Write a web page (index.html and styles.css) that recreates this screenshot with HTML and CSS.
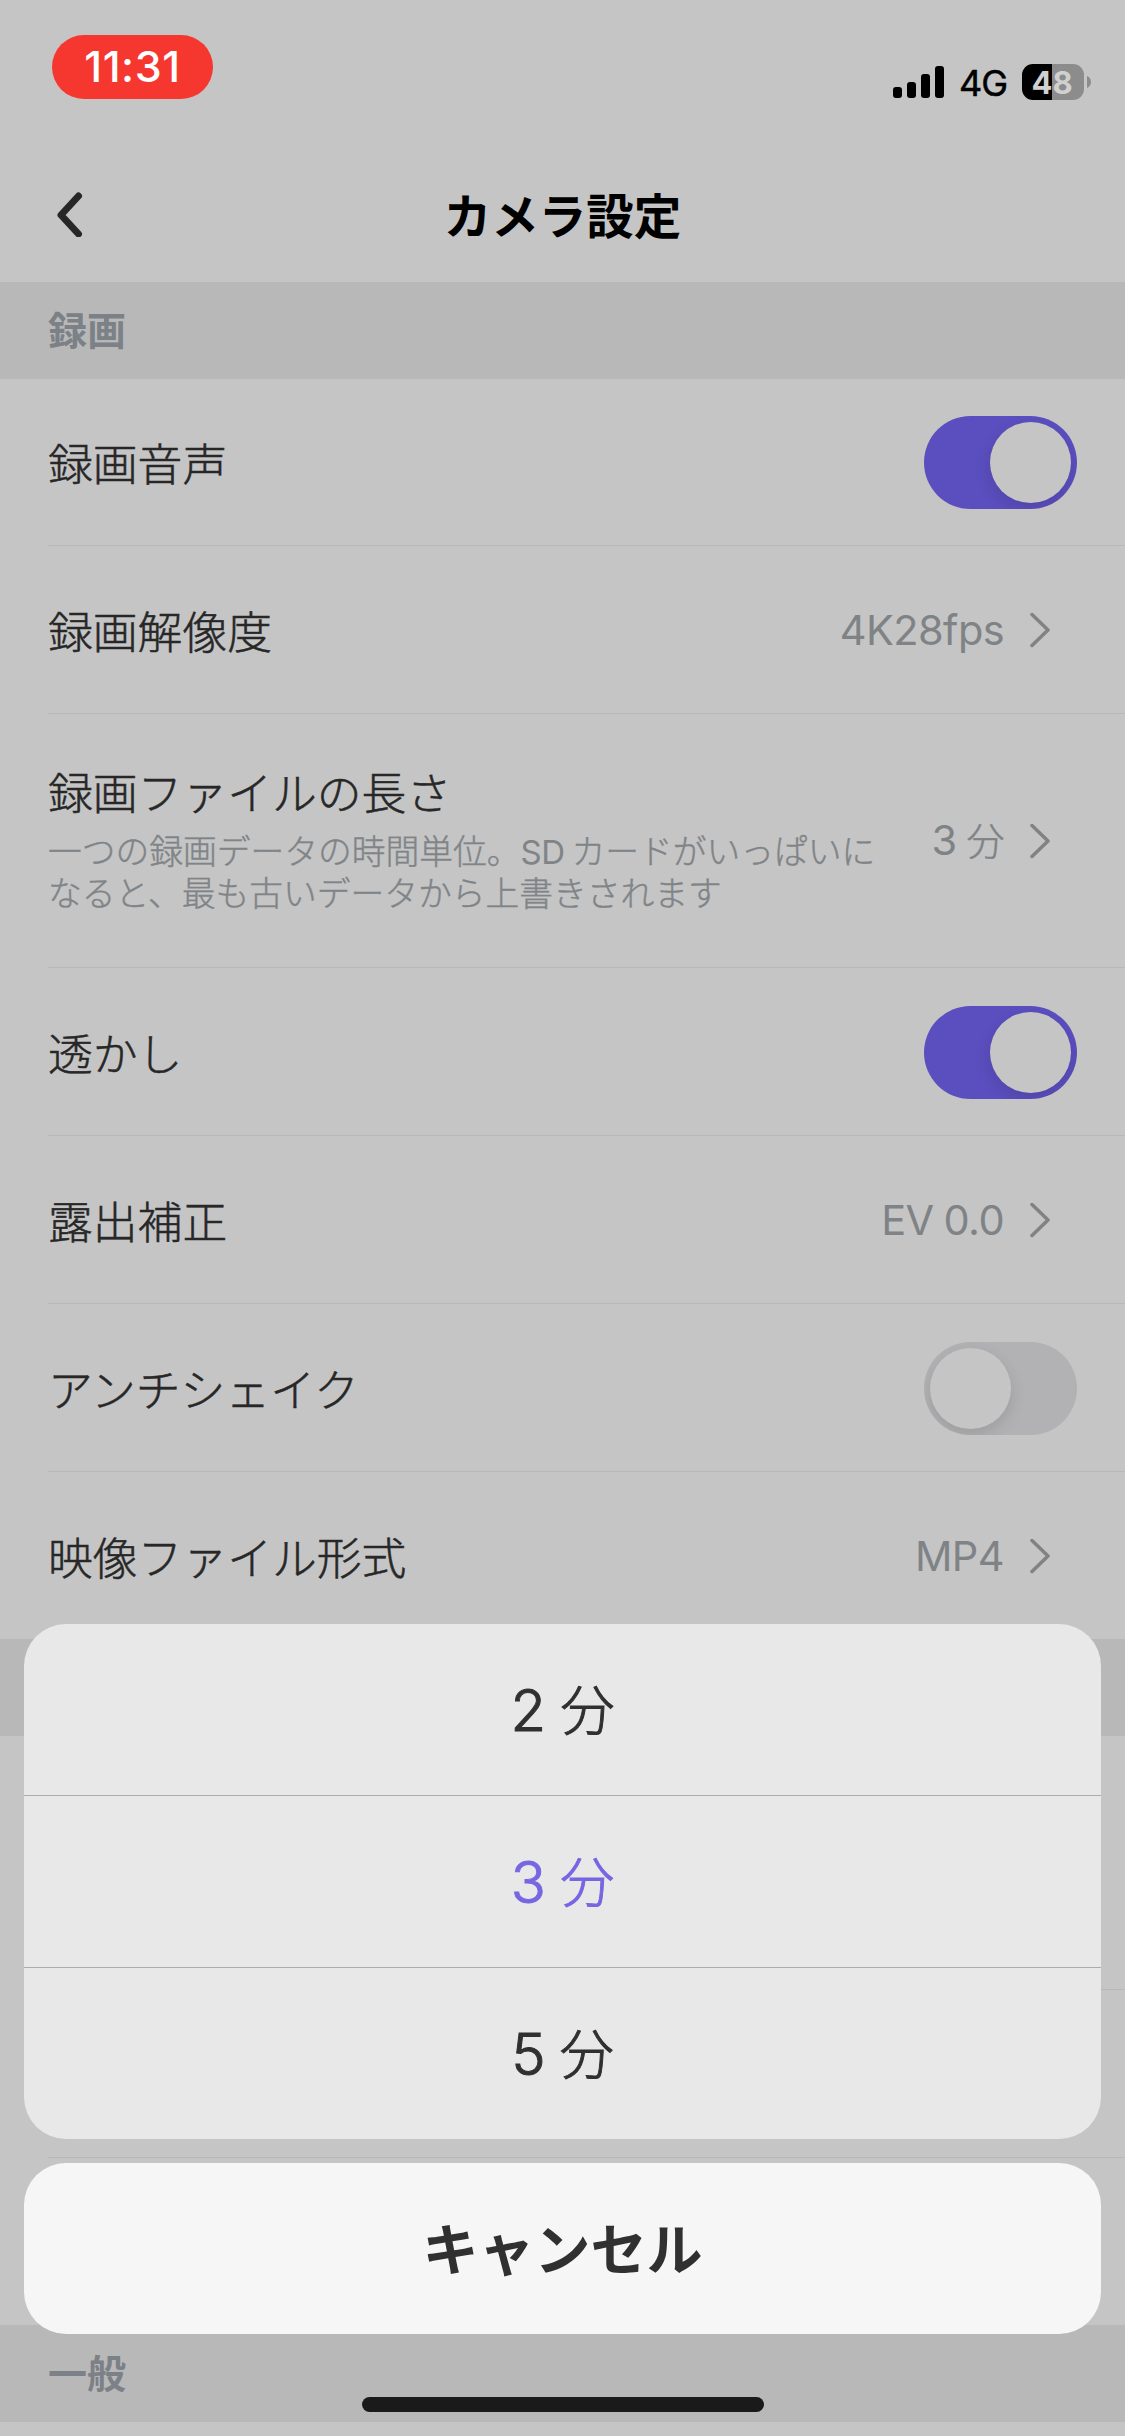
FILE: index.html
```html
<!DOCTYPE html>
<html lang="ja">
<head>
<meta charset="utf-8">
<title>カメラ設定</title>
<link rel="stylesheet" href="styles.css">
</head>
<body>
<div class="screen">
  <header class="status">
    <div class="clock">11:31</div>
    <div class="indicators">
      <svg class="signal" width="51" height="32" viewBox="0 0 51 32"><rect x="0" y="21" width="9" height="11" rx="3"/><rect x="14" y="16" width="9" height="16" rx="3"/><rect x="28" y="8" width="9" height="24" rx="3"/><rect x="42" y="0" width="9" height="32" rx="3"/></svg>
      <span class="network">4G</span>
      <div class="battery">48</div>
      <svg class="battery-tip" width="4" height="12" viewBox="0 0 4 12"><path d="M0 0C2.6 1.2 4 3.4 4 6s-1.4 4.800-4 6z"/></svg>
    </div>
  </header>
  <nav class="navbar">
    <svg class="back" width="29" height="46" viewBox="0 0 29 46"><path d="M23.500 5 6 24l17.500 19"/></svg>
    <h1 class="title">カメラ設定</h1>
  </nav>
  <h2 class="section">録画</h2>
  <div class="list">
    <div class="row first"><span class="label">録画音声</span><span class="toggle on"><i class="knob"></i></span></div>
    <div class="row"><span class="label">録画解像度</span><span class="value">4K28fps</span><svg class="chev" width="21" height="36" viewBox="0 0 21 36"><path d="M2 2.500 18 18 2 33.500"/></svg></div>
    <div class="row tall">
      <div class="text"><span class="label">録画ファイルの長さ</span><p class="desc">一つの録画データの時間単位。<span class="latin">SD</span>カードがいっぱいに<br>なると、最も古いデータから上書きされます</p></div>
      <span class="value">3 <span class="unit">分</span></span><svg class="chev" width="21" height="36" viewBox="0 0 21 36"><path d="M2 2.500 18 18 2 33.500"/></svg></div>
    <div class="row"><span class="label">透かし</span><span class="toggle on"><i class="knob"></i></span></div>
    <div class="row"><span class="label">露出補正</span><span class="value">EV 0.0</span><svg class="chev" width="21" height="36" viewBox="0 0 21 36"><path d="M2 2.500 18 18 2 33.500"/></svg></div>
    <div class="row"><span class="label">アンチシェイク</span><span class="toggle"><i class="knob"></i></span></div>
    <div class="row last"><span class="label">映像ファイル形式</span><span class="value">MP4</span><svg class="chev" width="21" height="36" viewBox="0 0 21 36"><path d="M2 2.500 18 18 2 33.500"/></svg></div>
  </div>
  <div class="section"></div>
  <div class="list">
    <div class="row tall"></div>
    <div class="row"></div>
    <div class="row last"></div>
  </div>
  <h2 class="section">一般</h2>
  <div class="sheet">
    <div class="options">
      <div class="option">2 <span class="unit">分</span></div>
      <div class="option selected">3 <span class="unit">分</span></div>
      <div class="option">5 <span class="unit">分</span></div>
    </div>
    <div class="cancel">キャンセル</div>
  </div>
  <div class="home"></div>
</div>
</body>
</html>
```
FILE: styles.css
```css
* { box-sizing: border-box; }
body { margin: 0; }
.screen {
  position: relative;
  width: 1125px;
  height: 2436px;
  overflow: hidden;
  background: #c5c5c5;
  color: #272727;
  font-family: Inter, "Noto Sans CJK JP", sans-serif;
}
h1, h2, p { margin: 0; }

.status {
  display: flex;
  justify-content: space-between;
  height: 146px;
  padding: 35px 34px 0 52px;
}
.clock {
  width: 161px;
  height: 64px;
  border-radius: 32px;
  background: #f5372f;
  color: #fff;
  font-size: 43px;
  font-weight: 500;
  letter-spacing: .6px;
  line-height: 63px;
  text-align: center;
}
.indicators {
  display: flex;
  align-items: center;
  height: 36px;
  margin-top: 29px;
  color: #000;
}
.network {
  width: 63px;
  margin-left: 15px;
  font-size: 36px;
  line-height: 36px;
  padding-top: 2px;
  letter-spacing: -1px;
  -webkit-text-stroke: .5px;
}
.battery {
  width: 62px;
  height: 36px;
  border-radius: 11px;
  background: linear-gradient(90deg, #000 30px, #8c8c8c 30px);
  color: #d0d0d0;
  font-size: 31px;
  font-weight: 700;
  line-height: 37px;
  padding-right: 2px;
  text-align: center;
}
.battery-tip { margin-left: 3px; fill: #8c8c8c; }

.navbar {
  display: grid;
  grid-template-columns: 120px 1fr 120px;
  align-items: center;
  height: 136px;
}
.back { margin-left: 54.500px; fill: none; stroke: #272727; stroke-width: 7; stroke-linecap: round; stroke-linejoin: round; }
.title { padding-top: 6px; color: #000; font-size: 47.500px; font-weight: 700; line-height: 60px; text-align: center; }

.section {
  height: 97px;
  padding-left: 48px;
  background: #b8b8b8;
  color: #7c8087;
  font-size: 39px;
  font-weight: 700;
  line-height: 97px;
}
.list { margin-left: 48px; }
.row {
  display: flex;
  align-items: center;
  height: 168px;
  padding-right: 48px;
  border-bottom: 1px solid #b8b8b8;
}
.row.first { height: 167px; }
.row.tall { height: 254px; }
.row.last { height: 167px; border-bottom: 0; }
.label {
  flex: 1;
  display: block;
  padding-top: 6px;
  font-size: 44.800px;
  font-weight: 300;
  line-height: 60px;
  -webkit-text-stroke: .5px;
}
.text { flex: 1; padding-bottom: 3px; }
.text .label { padding: 0 0 7px; }
.desc { color: #808487; font-size: 33.750px; font-weight: 300; line-height: 42px; white-space: nowrap; -webkit-text-stroke: .4px; }
.latin { margin-right: 7px; font-size: 33px; font-weight: 400; letter-spacing: -.5px; -webkit-text-stroke: 0; }
.value { color: #7f8386; font-size: 41.500px; letter-spacing: -.6px; word-spacing: -1px; line-height: 60px; }
.value .unit { font-size: 38px; font-weight: 300; -webkit-text-stroke: .5px; }
.chev { margin: 0 26px; fill: none; stroke: #828282; stroke-width: 3.500; stroke-linecap: round; stroke-linejoin: round; }

.toggle {
  display: flex;
  width: 153px;
  height: 93px;
  padding: 6px;
  border-radius: 47px;
  background: #b2b2b4;
  overflow: hidden;
}
.row:not(.first) .toggle { margin-top: 1px; }
.toggle.on { justify-content: flex-end; background: #5b4ebf; }
.knob { width: 81px; height: 81px; border-radius: 50%; background: #c5c5c5; box-shadow: 0 6px 16px rgba(0, 0, 0, .12); }

/* action sheet over the settings list */
.sheet {
  position: absolute;
  left: 24px;
  right: 24px;
  top: 1624px;
  display: grid;
  gap: 24px;
  color: #303030;
  font-size: 58px;
  text-align: center;
}
.options { border-radius: 42px; background: #e8e8e8; overflow: hidden; }
.option {
  height: 172px;
  border-bottom: 1px solid #acacaf;
  font-weight: 300;
  line-height: 172px;
  word-spacing: -2px;
  -webkit-text-stroke: 1px;
}
.option .unit { font-size: 54px; }
.option:last-child { height: 171px; border-bottom: 0; }
.selected { color: #7666e2; }
.cancel { height: 171px; border-radius: 42px; background: #f6f6f6; font-size: 56px; font-weight: 700; line-height: 174px; }
.home { position: absolute; left: 362px; top: 2397px; width: 402px; height: 15px; border-radius: 8px; background: #1a1a1a; }
```
